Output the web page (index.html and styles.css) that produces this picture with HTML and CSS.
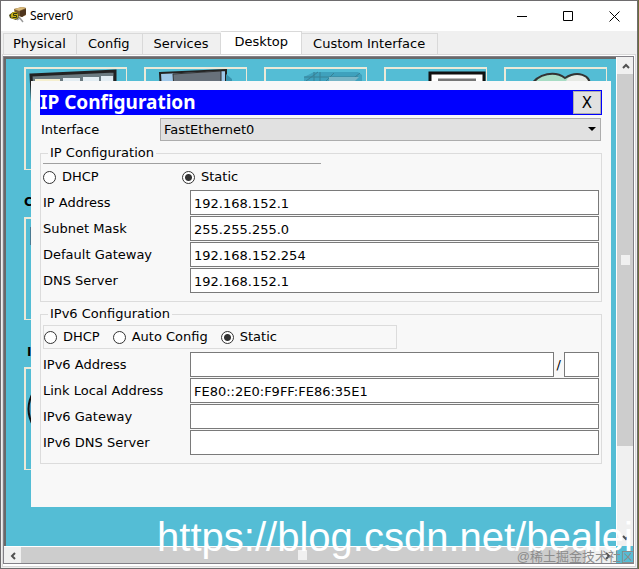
FILE: index.html
```html
<!DOCTYPE html>
<html lang="en">
<head>
    <meta charset="UTF-8">
    <meta name="viewport" content="width=device-width, initial-scale=1.0">
    <title>Server0</title>
    <link rel="stylesheet" href="styles.css">
</head>
<body>
    <div class="window">
        <header class="titlebar">
            <svg class="app-icon" width="18" height="18" viewBox="0 0 18 18">
                <path d="M5 2l8-2 4 1v7l-4 2-7-2z" fill="#7c5c30"/>
                <path d="M5 2l8-2 4 1-7 3z" fill="#d9b878"/>
                <path d="M11 4l6-2v5l-4 3-2-1z" fill="#4e351e"/>
                <path d="M0 8l4-3 5 1 1 5-3 2-6-2z" fill="#4c4a1c"/>
                <circle cx="5.500" cy="8.500" r="3.500" fill="#c9b018"/>
                <path d="M8 6.500H4.500v2h3v2H3.500" fill="none" stroke="#33380f"/>
                <path d="M10 10l4 5M8 13l3-2" stroke="#999" stroke-width="1.500"/>
            </svg>
            <h1 class="window-title">Server0</h1>
            <div class="window-buttons">
                <button type="button" aria-label="Minimize"><svg width="11" height="11"><path d="M0 5.500h10" stroke="#000"/></svg></button>
                <button type="button" aria-label="Maximize"><svg width="11" height="11"><path d="M.5.5h9v9h-9z" fill="none" stroke="#000"/></svg></button>
                <button type="button" aria-label="Close"><svg width="11" height="11"><path d="M.5.5l10 10M10.5.5l-10 10" stroke="#000"/></svg></button>
            </div>
        </header>

        <nav class="tabs">
            <button type="button" class="tab">Physical</button>
            <button type="button" class="tab">Config</button>
            <button type="button" class="tab">Services</button>
            <button type="button" class="tab active">Desktop</button>
            <button type="button" class="tab">Custom Interface</button>
        </nav>

        <main class="pane">
            <div class="frame">
                <div class="desktop">
                    <div class="apps">
                        <div class="app">
                            <svg viewBox="0 0 100 100">
                                <path d="M5 6l84-4v40H7z" fill="#6b7a80"/>
                                <path d="M5 6l84-4v40H7z" fill="none" stroke="#222" stroke-width="3"/>
                                <path d="M9 10h25v30H9z" fill="#f5efcf"/>
                                <path d="M37 9h17v30H37zM57 8h16v30H57zM75 7h12v30H75z" fill="#e3edf3"/>
                            </svg>
                        </div>
                        <div class="app">
                            <svg viewBox="0 0 100 100">
                                <path d="M14 4l66-3v40H16z" fill="#9fc8ea" stroke="#222" stroke-width="2"/>
                                <path d="M27 5l48-3v35H29z" fill="#68717b" stroke="#333"/>
                                <path d="M80 5l6 5v30h-6z" fill="#3792ad"/>
                            </svg>
                        </div>
                        <div class="app">
                            <svg viewBox="0 0 100 100">
                                <path d="M38 8l10-5h44l4 3v30H38z" fill="#3fa1bd"/>
                                <path d="M38 8h54M48 3v30M54 3v30M40 12l12-9M60 12l8-8M84 12l10-8" fill="none" stroke="#398196"/>
                                <path d="M63 8h30l-4 4v20H63z" fill="#78b5c6"/>
                            </svg>
                        </div>
                        <div class="app">
                            <svg viewBox="0 0 100 100">
                                <path d="M44 4h54v50H44z" fill="#fff" stroke="#111" stroke-width="3"/>
                                <path d="M52 11h38" stroke="#777" stroke-width="3"/>
                            </svg>
                        </div>
                        <div class="app">
                            <svg viewBox="0 0 100 100">
                                <path d="M24 18C32 3 50 2 59 9C70 2 86 4 84 20z" fill="#a7dcc4"/>
                                <path d="M62 9C72 3 86 5 84 20H55z" fill="#e6e9e4"/>
                                <path d="M24 18C32 3 50 2 59 9C70 2 86 4 84 20" fill="none" stroke="#333" stroke-width="2"/>
                            </svg>
                        </div>
                        <div class="app-label">C</div>
                        <div class="app side"><svg viewBox="0 0 100 100"><path d="M4 8h14v18H4z" fill="#4a7a92"/></svg></div>
                        <div class="app-label narrow">I</div>
                        <div class="app side"><svg viewBox="0 0 100 100"><path d="M8 22Q-3 40 8 58z" fill="#4f9dc0" stroke="#111" stroke-width="2"/></svg></div>
                    </div>

                    <form class="dialog">
                        <div class="dialog-title">
                            <h2>IP Configuration</h2>
                            <button type="button" class="dialog-close">X</button>
                        </div>
                        <div class="interface-row">
                            <label for="interface">Interface</label>
                            <div class="select-box">
                                <select id="interface">
                                    <option>FastEthernet0</option>
                                </select>
                                <svg width="8" height="4"><path d="M0 0h8L4 4z"/></svg>
                            </div>
                        </div>

                        <fieldset class="group">
                            <legend>IP Configuration</legend>
                            <div class="modes line">
                                <label><input type="radio" name="ipv4"> DHCP</label>
                                <label><input type="radio" name="ipv4" checked> Static</label>
                            </div>
                            <div class="fields">
                                <label for="ip">IP Address</label>
                                <input type="text" id="ip" value="192.168.152.1">
                                <label for="mask">Subnet Mask</label>
                                <input type="text" id="mask" value="255.255.255.0">
                                <label for="gateway">Default Gateway</label>
                                <input type="text" id="gateway" value="192.168.152.254">
                                <label for="dns">DNS Server</label>
                                <input type="text" id="dns" value="192.168.152.1">
                            </div>
                        </fieldset>

                        <fieldset class="group">
                            <legend>IPv6 Configuration</legend>
                            <div class="modes box">
                                <label><input type="radio" name="ipv6"> DHCP</label>
                                <label><input type="radio" name="ipv6"> Auto Config</label>
                                <label><input type="radio" name="ipv6" checked> Static</label>
                            </div>
                            <div class="fields">
                                <label for="ip6">IPv6 Address</label>
                                <div class="prefixed">
                                    <input type="text" id="ip6">
                                    <label for="prefix">/</label>
                                    <input type="text" id="prefix" class="prefix">
                                </div>
                                <label for="linklocal">Link Local Address</label>
                                <input type="text" id="linklocal" value="FE80::2E0:F9FF:FE86:35E1">
                                <label for="gateway6">IPv6 Gateway</label>
                                <input type="text" id="gateway6">
                                <label for="dns6">IPv6 DNS Server</label>
                                <input type="text" id="dns6">
                            </div>
                        </fieldset>
                    </form>
                </div>

                <div class="scroll vertical">
                    <button type="button" aria-label="Scroll up"><svg width="8" height="6"><path d="M1 5l3-3 3 3" /></svg></button>
                    <div class="thumb"></div>
                    <button type="button" aria-label="Scroll down"><svg width="8" height="6"><path d="M1 1l3 3 3-3" /></svg></button>
                </div>
                <div class="scroll horizontal">
                    <button type="button" aria-label="Scroll left"><svg width="6" height="8"><path d="M5 1l-3 3 3 3" /></svg></button>
                    <div class="thumb"></div>
                    <button type="button" aria-label="Scroll right"><svg width="6" height="8"><path d="M1 1l3 3-3 3" /></svg></button>
                </div>
            </div>
        </main>
        <div class="url-mark">https://blog.csdn.net/bealei</div>
        <div class="site-mark">@稀土掘金技术社区</div>
    </div>
</body>
</html>
```

FILE: styles.css
```css
* {
    box-sizing: border-box;
}
body {
    margin: 0;
    height: 100vh;
    display: flex;
    border-right: 1px solid #6b6c3c;
    font-family: "DejaVu Sans", Verdana, sans-serif;
    font-size: 13px;
    line-height: 16px;
    color: #000;
}
button, input, select {
    font: inherit;
    color: inherit;
    margin: 0;
    padding: 0;
    border: 0;
    border-radius: 0;
    background: none;
}
.window {
    position: relative;
    flex: 1;
    min-width: 0;
    display: flex;
    flex-direction: column;
    border: 1px solid #6e6c6e;
    background: #f0f0f0;
    overflow: hidden;
}

/* title bar */
.titlebar {
    display: flex;
    align-items: center;
    height: 30px;
    padding-left: 8px;
    background: #fff;
}
.window-title {
    flex: 1;
    margin: 0 0 0 3px;
    font: 12px/16px "Noto Sans", sans-serif;
}
.window-buttons {
    display: flex;
}
.window-buttons button {
    width: 46px;
    height: 28px;
}
.window-buttons svg {
    display: block;
    margin: 0 auto;
}

/* tabs */
.tabs {
    display: flex;
    align-items: flex-end;
    height: 23px;
    padding-left: 2px;
}
.tab {
    height: 21px;
    padding: 0 12px 0 11px;
    border: 1px solid #d9d9d9;
    border-left: 0;
    border-bottom: 0;
    white-space: nowrap;
}
.tab:first-child {
    padding: 0 10px 0 9px;
    border-left: 1px solid #d9d9d9;
}
.tab.active {
    height: 23px;
    padding: 0 13px 2px;
    background: #fff;
}

/* sunken frame with scrollbars */
.pane {
    flex: 1;
    min-height: 0;
    display: flex;
    margin: 0 1px 1px;
    padding: 1px 1px 2px 0;
    border: 1px solid #d9d9d9;
    background: #fff;
}
.frame {
    flex: 1;
    min-width: 0;
    display: grid;
    grid-template-columns: minmax(0, 1fr) 17px;
    grid-template-rows: minmax(0, 1fr) 17px;
    border: 1px solid #828087;
    background: #54bdd5;
}
.desktop {
    position: relative;
    overflow: hidden;
    padding: 8px 0 0 18px;
    border-top: 2px solid #696969;
    border-left: 2px solid #696969;
}
.apps {
    display: grid;
    grid-template-columns: repeat(5, 103px);
    grid-auto-rows: 103px 47px;
    column-gap: 17px;
}
.app {
    border: 2px solid #ece9d8;
    border-right-width: 1px;
    border-bottom-width: 1px;
}
.app svg {
    display: block;
    width: 100%;
    height: 100%;
}
.app-label, .app.side {
    grid-column: 1;
}
.app-label {
    padding-top: 24px;
    font-size: 12px;
    font-weight: bold;
}
.app-label.narrow {
    padding-left: 3px;
}

/* dialog over the desktop icons */
.dialog {
    position: absolute;
    inset: 22px 5px 39px 25px;
    padding: 9px;
    background: #f8f8f8;
}
.dialog-title {
    display: flex;
    align-items: center;
    height: 25px;
    padding-right: 1px;
    background: #00f;
    color: #fff;
}
.dialog-title h2 {
    flex: 1;
    margin: 0;
    font: bold 19px/25px "Noto Sans", sans-serif;
}
.dialog-close {
    width: 28px;
    height: 23px;
    border: 1px solid #adadad;
    background: #e1e1e1;
    color: #000;
    font-size: 15px;
}
.interface-row {
    display: flex;
    align-items: center;
    margin: 3px 1px 0;
}
.interface-row > label {
    width: 119px;
}
.select-box {
    position: relative;
    flex: 1;
}
.select-box select {
    display: block;
    width: 100%;
    height: 23px;
    padding-left: 3px;
    border: 1px solid #adadad;
    background: #e1e1e1;
    appearance: none;
}
.select-box svg {
    position: absolute;
    right: 5px;
    top: 9px;
}

/* option groups */
.group {
    min-width: 0;
    margin: 4px 0 0;
    padding: 0 2px 8px;
    border: 1px solid #dcdcdc;
}
.group legend {
    margin-left: 5px;
    padding: 0 2px;
}
.modes {
    display: flex;
    align-items: center;
    height: 24px;
    margin: 3px 0;
}
.modes label {
    display: flex;
    align-items: center;
    gap: 6px;
    white-space: nowrap;
}
.modes input {
    appearance: none;
    width: 13px;
    height: 13px;
    border: 1px solid #333;
    border-radius: 50%;
    background: #fff;
}
.modes input:checked {
    background: radial-gradient(circle, #333 0 3px, #fff 4px);
}
.modes.line {
    width: 50%;
    height: 27px;
    margin: 2px 0 0;
    border-top: 1px solid #a0a0a0;
}
.modes.line label {
    flex: 1;
}
.modes.box {
    width: 354px;
    gap: 13px;
    border: 1px solid #dcdcdc;
}
.fields {
    display: grid;
    grid-template-columns: 147px minmax(0, 1fr);
    row-gap: 1px;
    align-items: center;
}
.fields input {
    width: 100%;
    height: 25px;
    padding: 1px 3px 0;
    border: 1px solid #7a7a7a;
    background: #fff;
}
.prefixed {
    display: flex;
    align-items: center;
}
.prefixed label {
    padding: 0 3px;
}
.prefixed .prefix {
    width: 35px;
    flex: none;
}

/* scrollbars */
.scroll {
    display: flex;
    background: #f0f0f0;
}
.scroll button {
    flex: none;
    display: flex;
    align-items: center;
    justify-content: center;
    width: 17px;
    height: 17px;
}
.scroll path {
    fill: none;
    stroke: #505050;
    stroke-width: 2;
}
.thumb {
    display: flex;
    align-items: center;
    justify-content: center;
    background: #cdcdcd;
}
.thumb::after {
    content: "";
    width: 9px;
    height: 10px;
    background: #f0f0f0;
}
.vertical {
    flex-direction: column;
    border-left: 1px solid #fff;
}
.vertical .thumb {
    height: 76%;
    margin-bottom: auto;
}
.horizontal {
    border-top: 1px solid #fff;
}
.horizontal .thumb {
    width: 92%;
    margin-right: auto;
}

/* watermarks */
.url-mark {
    position: absolute;
    right: 4px;
    bottom: 8px;
    font: 40px/46px "Liberation Sans", Arial, sans-serif;
    color: #fff;
    white-space: nowrap;
}
.site-mark {
    position: absolute;
    right: 3px;
    bottom: 1px;
    font: 13px/20px "Liberation Sans", "Noto Sans CJK SC", sans-serif;
    color: #8c8c8c;
    white-space: nowrap;
}
```
